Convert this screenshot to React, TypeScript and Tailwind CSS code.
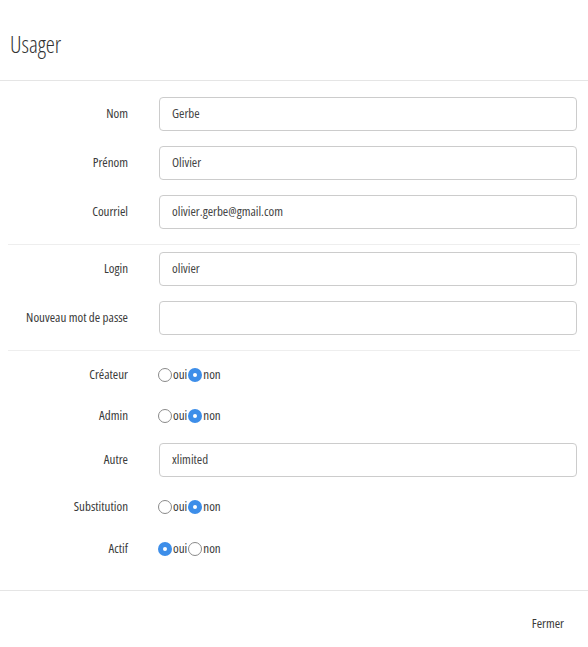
function Field({ label, value }: { label: string; value?: string }) {
  return (
    <div className="flex items-center">
      <label className="w-[128px] shrink-0 text-right text-[13px] text-[#3a3a3a]">{label}</label>
      <div className="ml-[31px] flex-1 pr-[11px]">
        <div className="h-[34px] rounded-[4px] border border-[#ccc] px-3 flex items-center text-[13px] text-[#444]">
          {value}
        </div>
      </div>
    </div>
  );
}

function Radio({ on }: { on: boolean }) {
  return on ? (
    <span className="w-[14px] h-[14px] rounded-full bg-[#3d8ee9] flex items-center justify-center">
      <span className="w-[4px] h-[4px] rounded-full bg-white" />
    </span>
  ) : (
    <span className="w-[14px] h-[14px] rounded-full border border-[#8a8a8a] bg-white" />
  );
}

function Choice({ label, yes }: { label: string; yes: boolean }) {
  return (
    <div className="flex items-center h-[34px]">
      <label className="w-[128px] shrink-0 text-right text-[13px] text-[#3a3a3a]">{label}</label>
      <div className="ml-[30px] flex items-center text-[13px] text-[#3a3a3a]">
        <Radio on={yes} />
        <span className="ml-[1px] mr-[1px]">oui</span>
        <Radio on={!yes} />
        <span className="ml-[1px]">non</span>
      </div>
    </div>
  );
}

export default function App() {
  return (
    <div className="w-[588px] h-[647px] bg-white font-['Open_Sans',sans-serif] font-stretch-condensed">
      <div className="h-[81px] px-[10px] pt-[28px] border-b border-[#e5e5e5]">
        <h4 className="text-[23px] leading-[32px] font-[350] text-[#333]">Usager</h4>
      </div>
      <div className="pt-[16px]">
        <div className="flex flex-col gap-[15px]">
          <Field label="Nom" value="Gerbe" />
          <Field label="Prénom" value="Olivier" />
          <Field label="Courriel" value="olivier.gerbe@gmail.com" />
        </div>
        <hr className="mx-[8px] mt-[15px] mb-[7px] border-t border-[#eee]" />
        <div className="flex flex-col gap-[15px]">
          <Field label="Login" value="olivier" />
          <Field label="Nouveau mot de passe" />
        </div>
        <hr className="mx-[8px] mt-[15px] mb-[7px] border-t border-[#eee]" />
        <Choice label="Créateur" yes={false} />
        <div className="mt-[7px]">
          <Choice label="Admin" yes={false} />
        </div>
        <div className="mt-[10px]">
          <Field label="Autre" value="xlimited" />
        </div>
        <div className="mt-[13px]">
          <Choice label="Substitution" yes={false} />
        </div>
        <div className="mt-[8px]">
          <Choice label="Actif" yes={true} />
        </div>
      </div>
      <div className="mt-[24px] border-t border-[#e5e5e5] flex justify-end pr-[24px] pt-[23px]">
        <span className="text-[13px] text-[#3a3a3a]">Fermer</span>
      </div>
    </div>
  );
}
